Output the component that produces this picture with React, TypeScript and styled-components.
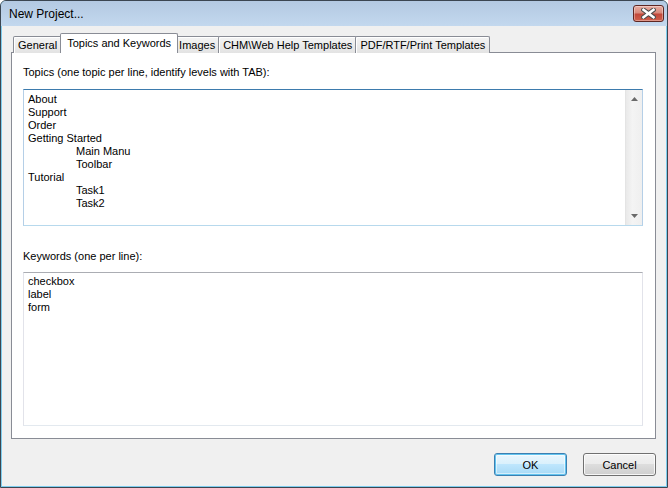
import styled, { createGlobalStyle } from 'styled-components';

const TABS = ['General', 'Topics and Keywords', 'Images', 'CHM\\Web Help Templates', 'PDF/RTF/Print Templates'];
const ACTIVE_TAB = 1;

const TOPICS = [
  { text: 'About', level: 0 },
  { text: 'Support', level: 0 },
  { text: 'Order', level: 0 },
  { text: 'Getting Started', level: 0 },
  { text: 'Main Manu', level: 1 },
  { text: 'Toolbar', level: 1 },
  { text: 'Tutorial', level: 0 },
  { text: 'Task1', level: 1 },
  { text: 'Task2', level: 1 },
];

const KEYWORDS = ['checkbox', 'label', 'form'];

function CloseGlyph() {
  return (
    <svg width="15" height="11" viewBox="0 0 15 11">
      <path d="M2.5 1.8 L12.5 9.2 M12.5 1.8 L2.5 9.2" stroke="#4b4b4b" strokeWidth="4.6" strokeLinecap="square" />
      <path d="M2.5 1.8 L12.5 9.2 M12.5 1.8 L2.5 9.2" stroke="#ffffff" strokeWidth="2.6" strokeLinecap="square" />
    </svg>
  );
}

function Arrow({ down }: { down?: boolean }) {
  return (
    <svg width="7" height="4" viewBox="0 0 7 4">
      <polygon points={down ? '0,0 7,0 3.5,4' : '0,4 7,4 3.5,0'} fill="#6a6a6a" />
    </svg>
  );
}

function App() {
  return (
    <>
      <GlobalStyle />
      <StWindow>
        <StTitleBar>
          <span>New Project...</span>
          <StCloseButton>
            <CloseGlyph />
          </StCloseButton>
        </StTitleBar>
        <StBody>
          <StTabList>
            {TABS.map((tab, i) => (
              <StTab key={tab} $active={i === ACTIVE_TAB}>
                {tab}
              </StTab>
            ))}
          </StTabList>
          <StPanel>
            <StLabel>Topics (one topic per line, identify levels with TAB):</StLabel>
            <StTopicsBox>
              <StLines>
                {TOPICS.map((t) => (
                  <StLine key={t.text} $level={t.level}>
                    {t.text}
                  </StLine>
                ))}
              </StLines>
              <StScrollBar>
                <Arrow />
                <Arrow down />
              </StScrollBar>
            </StTopicsBox>
            <StLabel $gapTop>Keywords (one per line):</StLabel>
            <StKeywordsBox>
              {KEYWORDS.map((k) => (
                <StLine key={k} $level={0}>
                  {k}
                </StLine>
              ))}
            </StKeywordsBox>
          </StPanel>
          <StFooter>
            <StButton $primary>OK</StButton>
            <StButton>Cancel</StButton>
          </StFooter>
        </StBody>
      </StWindow>
    </>
  );
}

export default App;

const GlobalStyle = createGlobalStyle`
  html, body {
    margin: 0;
    padding: 0;
    background: #ffffff;
  }
  body {
    font-family: "Liberation Sans", Arial, sans-serif;
    color: #000;
  }
`;

const StWindow = styled.div`
  box-sizing: border-box;
  display: flex;
  flex-direction: column;
  width: 668px;
  height: 488px;
  padding: 0 1px 1px;
  border: 1px solid #3b4651;
  border-radius: 6px 6px 0 0;
  background: #7fcdee;
  overflow: hidden;
`;

const StTitleBar = styled.div`
  display: flex;
  align-items: center;
  justify-content: space-between;
  height: 25px;
  margin: 0 -1px;
  padding: 0 3px 0 8px;
  background: linear-gradient(#b3c9e2, #c3d8ee);
  font-size: 12px;
  color: #000;
`;

const StCloseButton = styled.div`
  box-sizing: border-box;
  display: flex;
  align-items: center;
  justify-content: center;
  width: 31px;
  height: 17px;
  border: 1px solid #5e2622;
  border-radius: 3px;
  background: linear-gradient(#e9ada2, #d88a7c 45%, #c2483a 55%, #d0604c);
  box-shadow: inset 0 0 0 1px rgba(255, 255, 255, 0.35);
`;

const StBody = styled.div`
  box-sizing: border-box;
  display: flex;
  flex: 1;
  flex-direction: column;
  min-height: 0;
  padding: 7px 10px 10px 9px;
  background: #f0f0f0;
`;

const StTabList = styled.div`
  position: relative;
  z-index: 1;
  display: flex;
  align-items: flex-end;
  height: 20px;
  margin-bottom: -1px;
  padding-left: 2px;
`;

const StTab = styled.div<{ $active?: boolean }>`
  box-sizing: border-box;
  height: ${(p) => (p.$active ? 20 : 17)}px;
  margin: 0 ${(p) => (p.$active ? -2 : 0)}px;
  padding: ${(p) => (p.$active ? '3px 6px 0' : '2px 4px 0')};
  border: 1px solid #898c95;
  border-bottom: none;
  border-radius: 2px 2px 0 0;
  background: ${(p) => (p.$active ? '#ffffff' : 'linear-gradient(#f4f4f4, #e3e3e3)')};
  box-shadow: ${(p) => (p.$active ? 'none' : 'inset 1px 1px 0 #ffffff')};
  font-size: 11px;
  line-height: 13px;
  white-space: nowrap;
  position: relative;
  z-index: ${(p) => (p.$active ? 2 : 1)};

  & + & {
    margin-left: ${(p) => (p.$active ? -2 : -1)}px;
  }
`;

const StPanel = styled.div`
  box-sizing: border-box;
  display: flex;
  flex: 1;
  flex-direction: column;
  min-height: 0;
  padding: 13px 12px 12px 11px;
  border: 1px solid #898c95;
  background: #ffffff;
`;

const StLabel = styled.div<{ $gapTop?: boolean }>`
  margin: ${(p) => (p.$gapTop ? 24 : 0)}px 0 ${(p) => (p.$gapTop ? 9 : 10)}px;
  font-size: 11px;
  line-height: 13px;
`;

const StTopicsBox = styled.div`
  box-sizing: border-box;
  display: flex;
  height: 137px;
  border: 1px solid;
  border-color: #3d7bad #b5cfe7 #b7d9ed #b5cfe7;
  background: #ffffff;
`;

const StLines = styled.div`
  flex: 1;
  padding: 3px 0 0 4px;
`;

const StLine = styled.div<{ $level: number }>`
  padding-left: ${(p) => p.$level * 48}px;
  font-size: 11px;
  line-height: 13px;
  white-space: nowrap;
`;

const StScrollBar = styled.div`
  box-sizing: border-box;
  display: flex;
  flex-direction: column;
  align-items: center;
  justify-content: space-between;
  width: 17px;
  padding: 7px 0 7px;
  border-left: 1px solid #e4e4e4;
  background: linear-gradient(to right, #e9e9e9, #f4f4f4 40%, #efefef);
`;

const StKeywordsBox = styled.div`
  box-sizing: border-box;
  flex: 1;
  padding: 2px 0 0 4px;
  border: 1px solid;
  border-color: #abadb3 #e2e3ea #e3e9ef #e2e3ea;
  background: #ffffff;
`;

const StFooter = styled.div`
  display: flex;
  justify-content: flex-end;
  gap: 16px;
  margin-top: 14px;
`;

const StButton = styled.div<{ $primary?: boolean }>`
  box-sizing: border-box;
  display: flex;
  align-items: center;
  justify-content: center;
  width: 73px;
  height: 23px;
  border: 1px solid ${(p) => (p.$primary ? '#3c7fb1' : '#707070')};
  border-radius: 3px;
  background: ${(p) =>
    p.$primary
      ? 'linear-gradient(#eaf6fd, #d9f0fc 50%, #bee6fd 50%, #a7d9f5)'
      : 'linear-gradient(#f2f2f2, #ebebeb 50%, #dddddd 50%, #cfcfcf)'};
  box-shadow: ${(p) =>
    p.$primary ? 'inset 0 0 0 1px #62c4ef, inset 0 0 0 2px rgba(255,255,255,0.5)' : 'inset 0 0 0 1px rgba(255,255,255,0.8)'};
  font-size: 11px;
  color: #000;
`;
